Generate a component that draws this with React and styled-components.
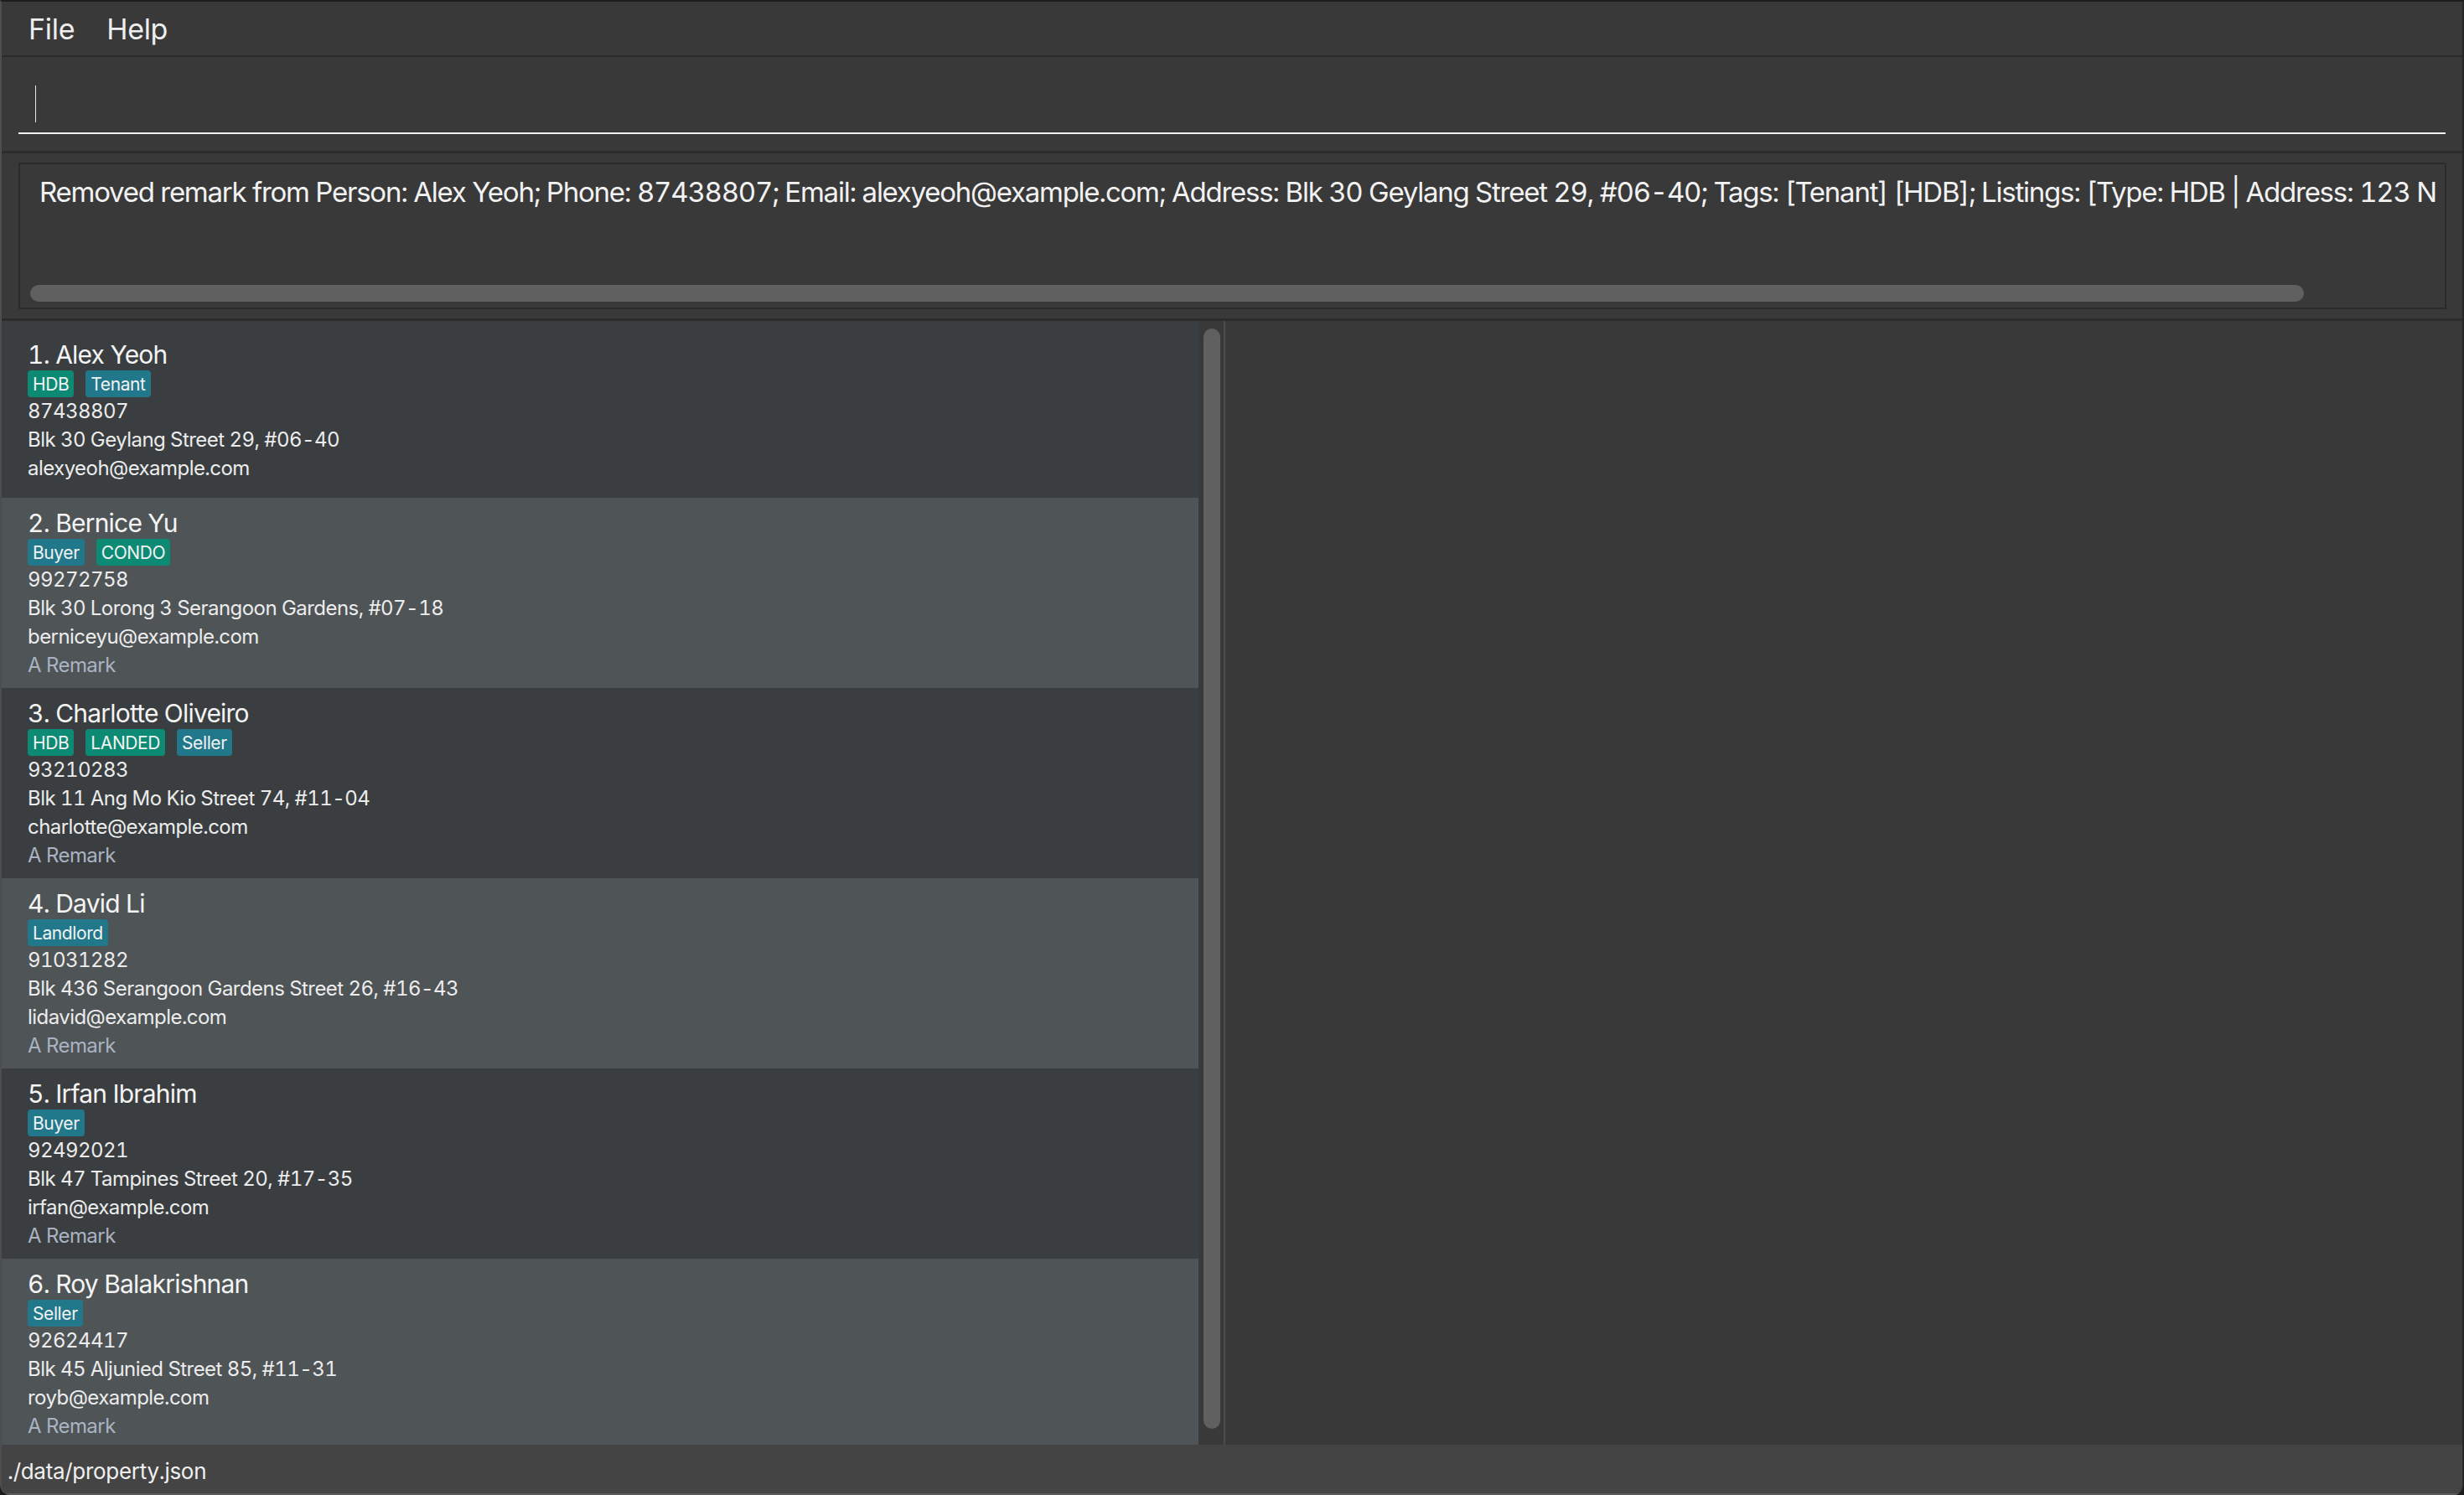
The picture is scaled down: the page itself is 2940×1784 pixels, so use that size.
import React from "react";
import styled, { createGlobalStyle } from "styled-components";

const GlobalStyle = createGlobalStyle`
  html, body {
    margin: 0;
    padding: 0;
    background: #1c1c1c;
  }

  body {
    font-family: Inter, "Noto Sans", "Liberation Sans", sans-serif;
    font-variant-numeric: tabular-nums;
    -webkit-font-smoothing: antialiased;
  }
`;

const Window = styled.div`
  width: 100vw;
  height: 100vh;
  box-sizing: border-box;

  display: flex;
  flex-direction: column;

  background: #393939;
  border-top: 2px solid #1c1c1c;
  border-left: 2px solid #4e4e4e;
  border-right: 2px solid #262626;
  border-radius: 0 0 12px 12px;
  overflow: hidden;
`;

const MenuBar = styled.div`
  height: 64px;
  flex-shrink: 0;

  display: flex;
  align-items: center;

  padding-left: 13px;
  background: #393939;
  border-bottom: 2px solid #2b2b2b;
`;

const MenuItem = styled.span`
  padding: 0 19px;
  color: #eeeeee;
  font-size: 34px;
  letter-spacing: -0.3px;
`;

const CommandSection = styled.div`
  flex-shrink: 0;
  padding: 34px 20px 20px 20px;
  background: #393939;
  border-bottom: 3px solid #2c2c2c;
`;

const CommandField = styled.div`
  height: 56px;
  display: flex;
  align-items: flex-start;
  border-bottom: 2px solid #f2f2f2;
`;

const Caret = styled.span`
  width: 1px;
  height: 44px;
  margin-left: 20px;
  background: #e8e8e8;
`;

const ResultSection = styled.div`
  flex-shrink: 0;
  padding: 11px 19px 11px 20px;
  background: #393939;
  border-bottom: 3px solid #2c2c2c;
`;

const ResultBox = styled.div`
  height: 171px;
  display: flex;
  flex-direction: column;
  overflow: hidden;
  background: #393939;
  border: 2px solid #2b2b2b;
`;

const ResultText = styled.div`
  margin-top: 13px;
  padding-left: 23px;
  white-space: nowrap;
  overflow: hidden;
  color: #f2f2f2;
  font-size: 33px;
  line-height: 40px;
  letter-spacing: -1.25px;
`;

const HScrollTrack = styled.div`
  margin-top: auto;
  padding: 0 0 7px 12px;
`;

const HThumb = styled.div`
  width: 2713px;
  height: 20px;
  border-radius: 10px;
  background: #606060;
`;

const Main = styled.div`
  flex: 1;
  min-height: 0;
  display: flex;
`;

const ListPane = styled.div`
  width: 1458px;
  flex-shrink: 0;
  display: flex;
  background: #393939;
`;

const List = styled.div`
  width: 1428px;
  overflow: hidden;
`;

const Cell = styled.div`
  box-sizing: border-box;
  height: ${(p) => (p.$remark ? 227 : 211)}px;
  padding: ${(p) => (p.$remark ? "12px 0 9px 31px" : "22px 0 17px 31px")};
  background: ${(p) => (p.$even ? "#4f5457" : "#3a3e40")};
`;

const Name = styled.div`
  height: 36px;
  color: #f4f4f4;
  font-size: 30px;
  line-height: 36px;
  letter-spacing: -0.8px;
`;

const Tags = styled.div`
  display: flex;
  gap: 14px;
  margin-top: 1px;
`;

const Tag = styled.span`
  height: 32px;
  padding: 0 6px;
  display: flex;
  align-items: center;
  border-radius: 4px;
  background: ${(p) => (p.$kind === "property" ? "#0d8a74" : "#22788b")};
  color: #f2f2f2;
  font-size: 21px;
  letter-spacing: -0.4px;
`;

const Detail = styled.div`
  height: 34px;
  color: ${(p) => (p.$muted ? "#a9b3c1" : "#ececec")};
  font-size: 24px;
  line-height: 34px;
  letter-spacing: -0.55px;
  white-space: nowrap;
`;

const VScroll = styled.div`
  width: 30px;
  padding: 9px 4px 19px 6px;
  box-sizing: border-box;
  display: flex;
`;

const VThumb = styled.div`
  flex: 1;
  border-radius: 10px;
  background: #606060;
`;

const Divider = styled.div`
  width: 2px;
  flex-shrink: 0;
  background: #4c4c4c;
`;

const DetailPane = styled.div`
  flex: 1;
  background: #393939;
`;

const StatusBar = styled.div`
  height: 60px;
  flex-shrink: 0;
  box-sizing: border-box;
  padding: 4px 0 0 7px;
  display: flex;
  align-items: center;
  background: #444444;
  border-bottom: 2px solid #5b5b5b;
  color: #f0f0f0;
  font-size: 26px;
  letter-spacing: -0.3px;
`;

const PROPERTY_TAGS = ["HDB", "CONDO", "LANDED"];

const persons = [
  {
    name: "Alex Yeoh",
    tags: ["HDB", "Tenant"],
    phone: "87438807",
    address: "Blk 30 Geylang Street 29, #06-40",
    email: "alexyeoh@example.com",
    remark: ""
  },
  {
    name: "Bernice Yu",
    tags: ["Buyer", "CONDO"],
    phone: "99272758",
    address: "Blk 30 Lorong 3 Serangoon Gardens, #07-18",
    email: "berniceyu@example.com",
    remark: "A Remark"
  },
  {
    name: "Charlotte Oliveiro",
    tags: ["HDB", "LANDED", "Seller"],
    phone: "93210283",
    address: "Blk 11 Ang Mo Kio Street 74, #11-04",
    email: "charlotte@example.com",
    remark: "A Remark"
  },
  {
    name: "David Li",
    tags: ["Landlord"],
    phone: "91031282",
    address: "Blk 436 Serangoon Gardens Street 26, #16-43",
    email: "lidavid@example.com",
    remark: "A Remark"
  },
  {
    name: "Irfan Ibrahim",
    tags: ["Buyer"],
    phone: "92492021",
    address: "Blk 47 Tampines Street 20, #17-35",
    email: "irfan@example.com",
    remark: "A Remark"
  },
  {
    name: "Roy Balakrishnan",
    tags: ["Seller"],
    phone: "92624417",
    address: "Blk 45 Aljunied Street 85, #11-31",
    email: "royb@example.com",
    remark: "A Remark"
  }
];

const RESULT =
  "Removed remark from Person: Alex Yeoh; Phone: 87438807; Email: alexyeoh@example.com; " +
  "Address: Blk 30 Geylang Street 29, #06-40; Tags: [Tenant] [HDB]; " +
  "Listings: [Type: HDB | Address: 123 N";

function PersonCard({ person, index }) {
  const hasRemark = person.remark !== "";
  return (
    <Cell $even={index % 2 === 1} $remark={hasRemark}>
      <Name>
        {index + 1}. {person.name}
      </Name>
      <Tags>
        {person.tags.map((t) => (
          <Tag key={t} $kind={PROPERTY_TAGS.includes(t) ? "property" : "role"}>
            {t}
          </Tag>
        ))}
      </Tags>
      <Detail>{person.phone}</Detail>
      <Detail>{person.address}</Detail>
      <Detail>{person.email}</Detail>
      {hasRemark && <Detail $muted>{person.remark}</Detail>}
    </Cell>
  );
}

export default function App() {
  return (
    <>
      <GlobalStyle />
      <Window>
        <MenuBar>
          <MenuItem>File</MenuItem>
          <MenuItem>Help</MenuItem>
        </MenuBar>

        <CommandSection>
          <CommandField>
            <Caret />
          </CommandField>
        </CommandSection>

        <ResultSection>
          <ResultBox>
            <ResultText>{RESULT}</ResultText>
            <HScrollTrack>
              <HThumb />
            </HScrollTrack>
          </ResultBox>
        </ResultSection>

        <Main>
          <ListPane>
            <List>
              {persons.map((p, i) => (
                <PersonCard key={p.name} person={p} index={i} />
              ))}
            </List>
            <VScroll>
              <VThumb />
            </VScroll>
          </ListPane>
          <Divider />
          <DetailPane />
        </Main>

        <StatusBar>./data/property.json</StatusBar>
      </Window>
    </>
  );
}
